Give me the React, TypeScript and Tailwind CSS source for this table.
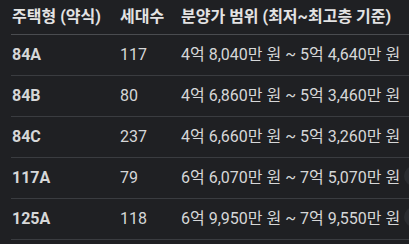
import React from "react";

const rows = [
  ["84A", "117", "4억 8,040만 원 ~ 5억 4,640만 원"],
  ["84B", "80", "4억 6,860만 원 ~ 5억 3,460만 원"],
  ["84C", "237", "4억 6,660만 원 ~ 5억 3,260만 원"],
  ["117A", "79", "6억 6,070만 원 ~ 7억 5,070만 원"],
  ["125A", "118", "6억 9,950만 원 ~ 7억 9,550만 원"],
];

export default function App() {
  return (
    <div
      className="w-[409px] h-[244px] overflow-hidden bg-[#1f2023] pl-[11px]"
      style={{ fontFamily: "Roboto, 'Noto Sans CJK KR', sans-serif" }}
    >
      <div className="w-[420px]">
        <div className="grid grid-cols-[109px_61px_1fr] h-[35px] items-center border-b border-[#4a4c50] text-[16px] font-bold text-[#e3e3e3] whitespace-nowrap">
          <div className="pl-[1px]">주택형 (약식)</div>
          <div>세대수</div>
          <div>분양가 범위 (최저~최고층 기준)</div>
        </div>
        {rows.map((r, i) => (
          <div
            key={i}
            className="relative grid grid-cols-[109px_61px_1fr] h-[41px] items-center border-b border-[#3a3c40] text-[16px] text-[#d6d7d8] whitespace-nowrap"
          >
            <div className="pl-[1px] font-bold">{r[0]}</div>
            <div>{r[1]}</div>
            <div>{r[2]}</div>
            {i >= 3 && (
              <div className="absolute left-[393px] top-[8px] w-[20px] h-[20px] rounded-full bg-[#2a2c30]" />
            )}
          </div>
        ))}
      </div>
    </div>
  );
}
